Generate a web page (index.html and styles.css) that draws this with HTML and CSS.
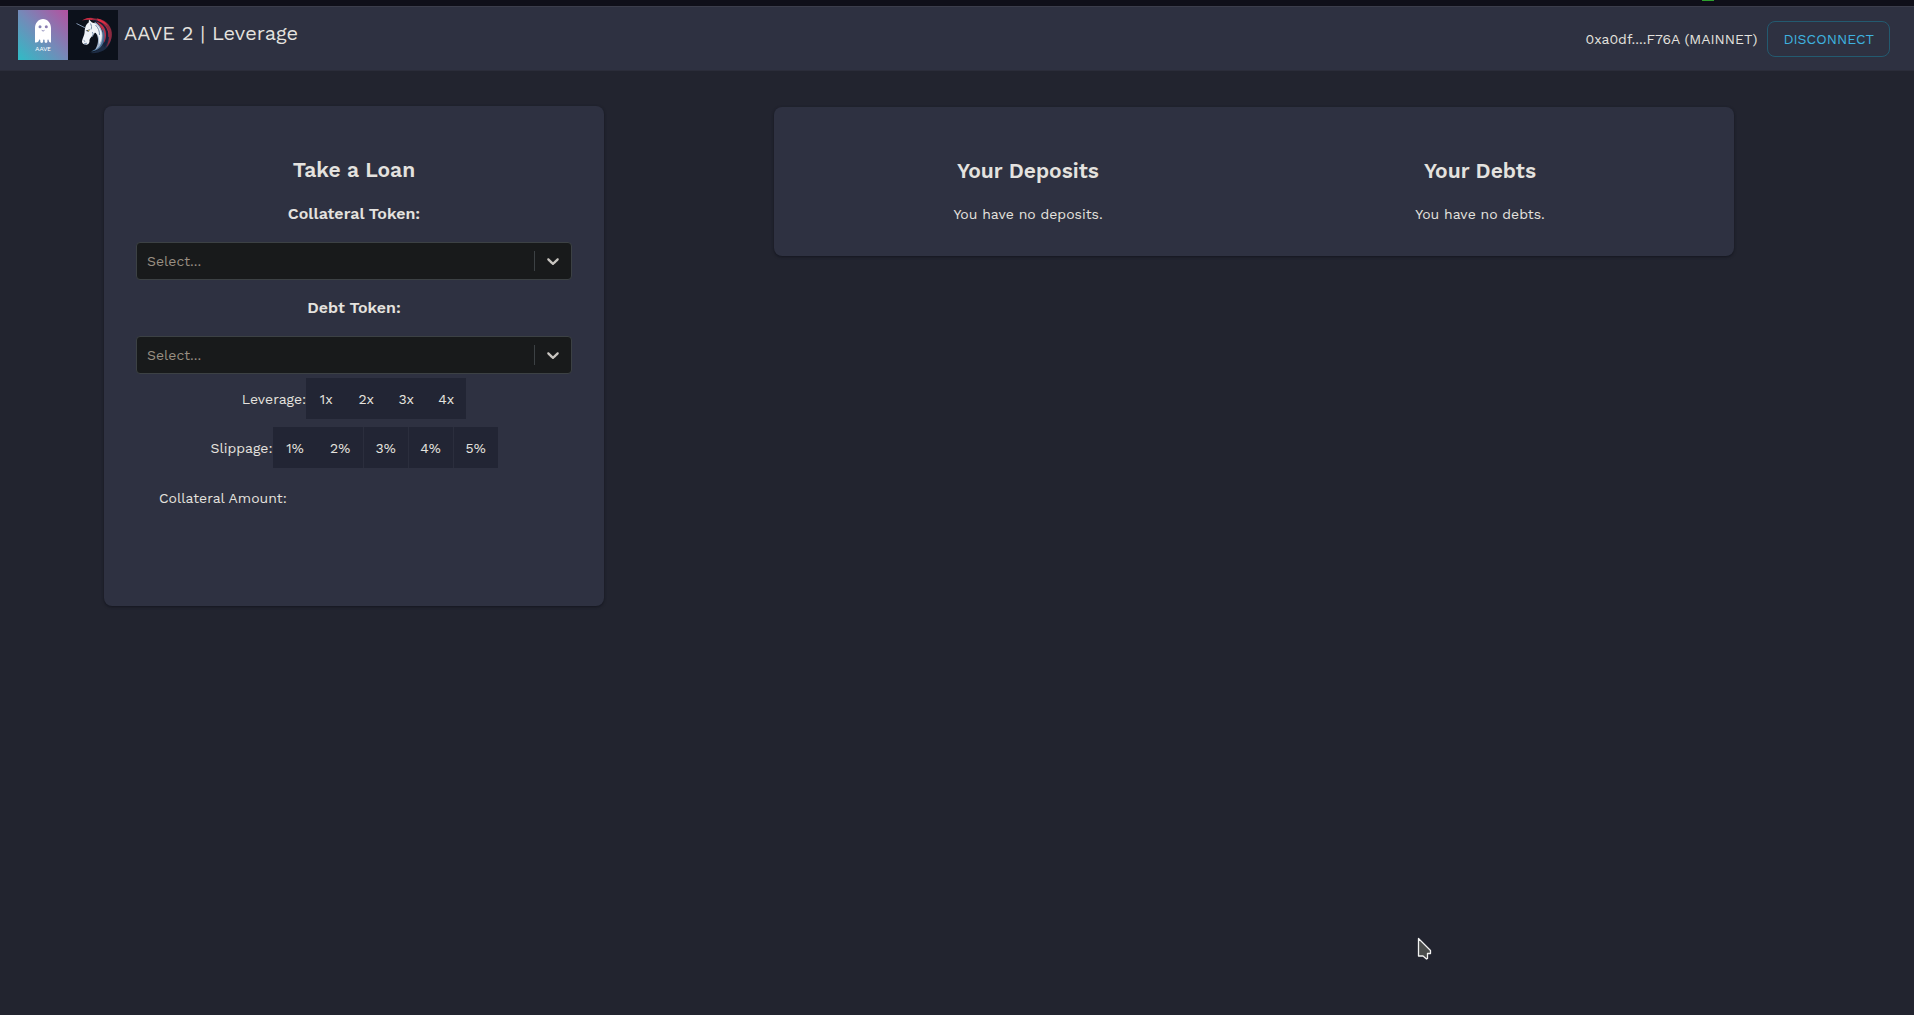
FILE: index.html
```html
<!DOCTYPE html>
<html lang="en">
<head>
<meta charset="utf-8">
<title>AAVE 2 | Leverage</title>
<meta name="viewport" content="width=device-width, initial-scale=1">
<link rel="stylesheet" href="styles.css">
</head>
<body>
<div class="top-strip"><span class="status-dot"></span></div>
<header class="header">
  <div class="brand">
    <svg class="logo" viewBox="0 0 50 50" role="img" aria-label="Aave">
      <defs>
        <linearGradient id="aave" x1="0" y1="1" x2="1" y2="0">
          <stop offset="0" stop-color="#2fbcc6"/>
          <stop offset="0.5" stop-color="#7589b8"/>
          <stop offset="1" stop-color="#b5509f"/>
        </linearGradient>
      </defs>
      <rect width="50" height="50" fill="url(#aave)"/>
      <path fill="#fff" d="M17 32.500V18c0-5 3.500-9 8-9s8 4 8 9v14.500c-1.500.4-2.300-.8-2.300-2.200 0-1.200-1.300-1.200-1.300 0v1.500c0 1.500-2.800 1.500-2.800 0v-1.500c0-1.200-1.500-1.200-1.500 0v1.500c0 1.500-2.800 1.500-2.800 0v-1.500c0-1.200-1.400-1.200-1.400 0 0 1.400-1.400 2.600-3.900 2.200z"/>
      <circle cx="22" cy="16.800" r="1.500" fill="#8583b4"/>
      <circle cx="28.300" cy="16.800" r="1.500" fill="#8c7db2"/>
      <path d="M23.700 20.300q1.400 1.500 2.800 0" fill="none" stroke="#8583b4" stroke-width=".9"/>
      <text class="logo-text" x="25" y="41" text-anchor="middle">AAVE</text>
    </svg>
    <svg class="logo" viewBox="0 0 50 50" role="img" aria-label="1inch">
      <rect width="50" height="50" fill="#0c111b"/>
      <path fill="#1d2c45" d="M36 14c7 4 9 12 6 19-3 7-10 11-21 10 8-1 14-6 15-12 1-7 2-12 0-17z"/>
      <path fill="#8c2a40" d="M14 10.500c4-3 9-3.500 13-2 9 0 16 6 16.800 14 .5 6-1.500 11-5.800 15 2.500-5 3.500-9 2.500-14-1-6-5-10-11-12-5-2-10-2.500-15.500-1z"/>
      <path fill="#e02c43" d="M15 9.800c3-1.800 6-2 9-1.200l4 2c-4-1-8-1.500-13-.8zM29 8.500c5 1 9 4 11 7.500-3-2-6-4-10-5zM34 13c5 3 7.500 8 7 14l-1.500-.5c0-5-2-10-5.500-13.500z"/>
      <path fill="#14203a" d="M24 9.500c8 1 14 5 16 12 1.500 6-.5 12-4 16l-2-8c1-8-3-15-10-20z"/>
      <path fill="#c22d45" d="M28 11.500c7 2 10.500 8 10 14-.1 3-1 6-2.500 8 .9-3 1-6 .2-9-1-5-3.500-9-7.700-13z"/>
      <path fill="#486d92" d="M35 18c3 7 2 15-3 20-3 2-6 3.500-9 3.500 7-3 10-7 10.500-14z"/>
      <path fill="#16243a" d="M33.500 19c2 6 1 13-3 18l1-12z"/>
      <path fill="#a5b7cf" d="M27 12c7 4 9 12 7 19-1 4-3 7-7 9 3-5 4-10 2-15-1-3-4-5-7-5z"/>
      <path fill="#f0f3f8" d="M21 9.500l3 3c5 1 8 5 9.500 10 .8 4 .2 8-2.500 12 .8-6-.5-10-4-12-2 4-6 5-5.500 9-.4 3-2.500 3.500-4.500 3-2.500-.3-3.500-2-2.800-4.200.7-3 2.300-5 2.400-8 .2-4 1-8 4.100-9.800z"/>
      <path d="M8.500 13.500l8.300 4.200" stroke="#8296b2" stroke-width="1"/>
      <path d="M17.500 20.800l4.500-1.500-1.500 2.500z" fill="#2d3748"/>
      <path d="M19.800 20.600h1.400" stroke="#e1c35d" stroke-width=".9"/>
      <path d="M22.500 13.500c1 2 1.500 4 .5 6M15.700 30.500l1.500 1M16 34l3-.8M24 22c1.500 1 1.500 3 0 5M27.500 15c3 3 4 6 4 10" stroke="#6b82a2" stroke-width=".9" fill="none"/>
    </svg>
    <h1 class="title">AAVE 2 | Leverage</h1>
  </div>
  <div class="account">
    <span>0xa0df....F76A (MAINNET)</span>
    <button class="disconnect" type="button">DISCONNECT</button>
  </div>
</header>

<main class="main">
  <section class="card loan">
    <h2 class="heading">Take a Loan</h2>
    <label class="field-label" for="collateral">Collateral Token:</label>
    <div class="select">
      <select id="collateral" class="select-input"><option>Select...</option></select>
      <span class="select-mark"><svg viewBox="0 0 20 20" width="20" height="20" aria-hidden="true"><path d="M4.516 7.548c0.436-0.446 1.043-0.481 1.576 0l3.908 3.747 3.908-3.747c0.533-0.481 1.141-0.446 1.574 0 0.436 0.445 0.408 1.197 0 1.615-0.406 0.418-4.695 4.502-4.695 4.502-0.217 0.223-0.502 0.335-0.787 0.335s-0.570-0.112-0.789-0.335c0 0-4.287-4.084-4.695-4.502s-0.436-1.170 0-1.615z"/></svg></span>
    </div>
    <label class="field-label" for="debt">Debt Token:</label>
    <div class="select">
      <select id="debt" class="select-input"><option>Select...</option></select>
      <span class="select-mark"><svg viewBox="0 0 20 20" width="20" height="20" aria-hidden="true"><path d="M4.516 7.548c0.436-0.446 1.043-0.481 1.576 0l3.908 3.747 3.908-3.747c0.533-0.481 1.141-0.446 1.574 0 0.436 0.445 0.408 1.197 0 1.615-0.406 0.418-4.695 4.502-4.695 4.502-0.217 0.223-0.502 0.335-0.787 0.335s-0.570-0.112-0.789-0.335c0 0-4.287-4.084-4.695-4.502s-0.436-1.170 0-1.615z"/></svg></span>
    </div>
    <div class="choices">
      <span>Leverage:</span>
      <div class="group leverage">
        <button type="button">1x</button><button type="button">2x</button><button type="button">3x</button><button type="button">4x</button>
      </div>
    </div>
    <div class="choices">
      <span>Slippage:</span>
      <div class="group slippage">
        <button type="button">1%</button><button type="button">2%</button><button type="button">3%</button><button type="button">4%</button><button type="button">5%</button>
      </div>
    </div>
    <p class="amount">Collateral Amount:</p>
  </section>

  <section class="card positions">
    <div class="position">
      <h2 class="heading">Your Deposits</h2>
      <p>You have no deposits.</p>
    </div>
    <div class="position">
      <h2 class="heading">Your Debts</h2>
      <p>You have no debts.</p>
    </div>
  </section>
</main>

<svg class="pointer" viewBox="0 0 16 24" aria-hidden="true"><path d="M1.500 1.500v17.500h4.500l3.500 3 1-.5v-5h3v-3z" fill="#4a4c4c" stroke="#f2f2f2" stroke-width="1.300" stroke-linejoin="round"/></svg>
</body>
</html>
```

FILE: styles.css
```css
* {
  box-sizing: border-box;
}

body {
  margin: 0;
  min-height: 100vh;
  background: #22242f;
  color: #e4e2df;
  font-family: "Work Sans", Inter, sans-serif;
  font-size: 14px;
  line-height: 20px;
}

button,
select {
  font: inherit;
  color: inherit;
}

h1,
h2,
p {
  margin: 0;
}

.top-strip {
  display: flex;
  justify-content: flex-end;
  height: 6px;
  padding-right: 200px;
  background: #0f0f19;
}

.status-dot {
  width: 12px;
  height: 1px;
  background: #2ea02e;
}

.header {
  display: flex;
  justify-content: space-between;
  align-items: flex-start;
  height: 65px;
  padding: 3px 24px 0 18px;
  background: #2e3141;
  border-top: 1px solid #3b3d4b;
  border-bottom: 1px solid #2b2d3a;
}

.brand {
  display: flex;
}

.logo {
  width: 50px;
  height: 50px;
}

.logo-text {
  font-family: Lato, sans-serif;
  font-size: 6px;
  fill: #fff;
}

.title {
  margin-left: 6px;
  font-size: 20px;
  font-weight: 400;
  line-height: 46px;
}

.account {
  display: flex;
  align-items: center;
  gap: 10px;
  padding-top: 11px;
}

.disconnect {
  height: 36px;
  padding: 0 15px;
  background: transparent;
  border: 1px solid #235a70;
  border-radius: 8px;
  color: #3eb1df;
}

.main {
  display: flex;
  align-items: flex-start;
  gap: 170px;
  padding: 35px 180px 35px 104px;
}

.card {
  background: #2e3141;
  border-radius: 8px;
  box-shadow: 0 1px 3px #14161f;
}

.loan {
  display: flex;
  flex-direction: column;
  flex: 0 0 500px;
  min-height: 500px;
  padding: 50px 32px;
}

.heading {
  font-size: 21px;
  font-weight: 600;
  line-height: 28px;
  text-align: center;
}

.field-label {
  padding: 18px 0;
  font-size: 16px;
  font-weight: 600;
  text-align: center;
}

.heading + .field-label {
  padding-top: 20px;
}

.select {
  display: grid;
  grid-template-columns: 1fr 37px;
  align-items: center;
  height: 38px;
  background: #181a1b;
  border: 1px solid #3c4144;
  border-radius: 4px;
}

.select-input {
  grid-area: 1 / 1 / 2 / 3;
  height: 36px;
  padding: 0 10px;
  appearance: none;
  background: transparent;
  border: 0;
  color: #988f82;
}

.select-mark {
  grid-area: 1 / 2;
  display: flex;
  padding: 0 8px;
  border-left: 1px solid #3c4144;
  fill: #c8c5c0;
  pointer-events: none;
}

.choices {
  display: flex;
  justify-content: center;
  align-items: center;
  margin-top: 4px;
}

.choices + .choices {
  margin-top: 8px;
}

.group {
  display: flex;
}

.group button {
  width: 40px;
  height: 41px;
  padding: 0;
  background: #222534;
  border: 0;
}

.slippage button {
  width: 45px;
}

.slippage button:nth-child(n + 3) {
  border-left: 1px solid #2b2e3d;
}

.amount {
  padding: 20px 23px 0;
}

.positions {
  display: flex;
  flex: 1;
  margin-top: 1px;
  padding: 50px 28px 32px;
}

.position {
  flex: 1;
  text-align: center;
}

.position p {
  padding-top: 19px;
}

.pointer {
  position: absolute;
  left: 1417px;
  top: 937px;
  width: 16px;
  height: 24px;
}
```
